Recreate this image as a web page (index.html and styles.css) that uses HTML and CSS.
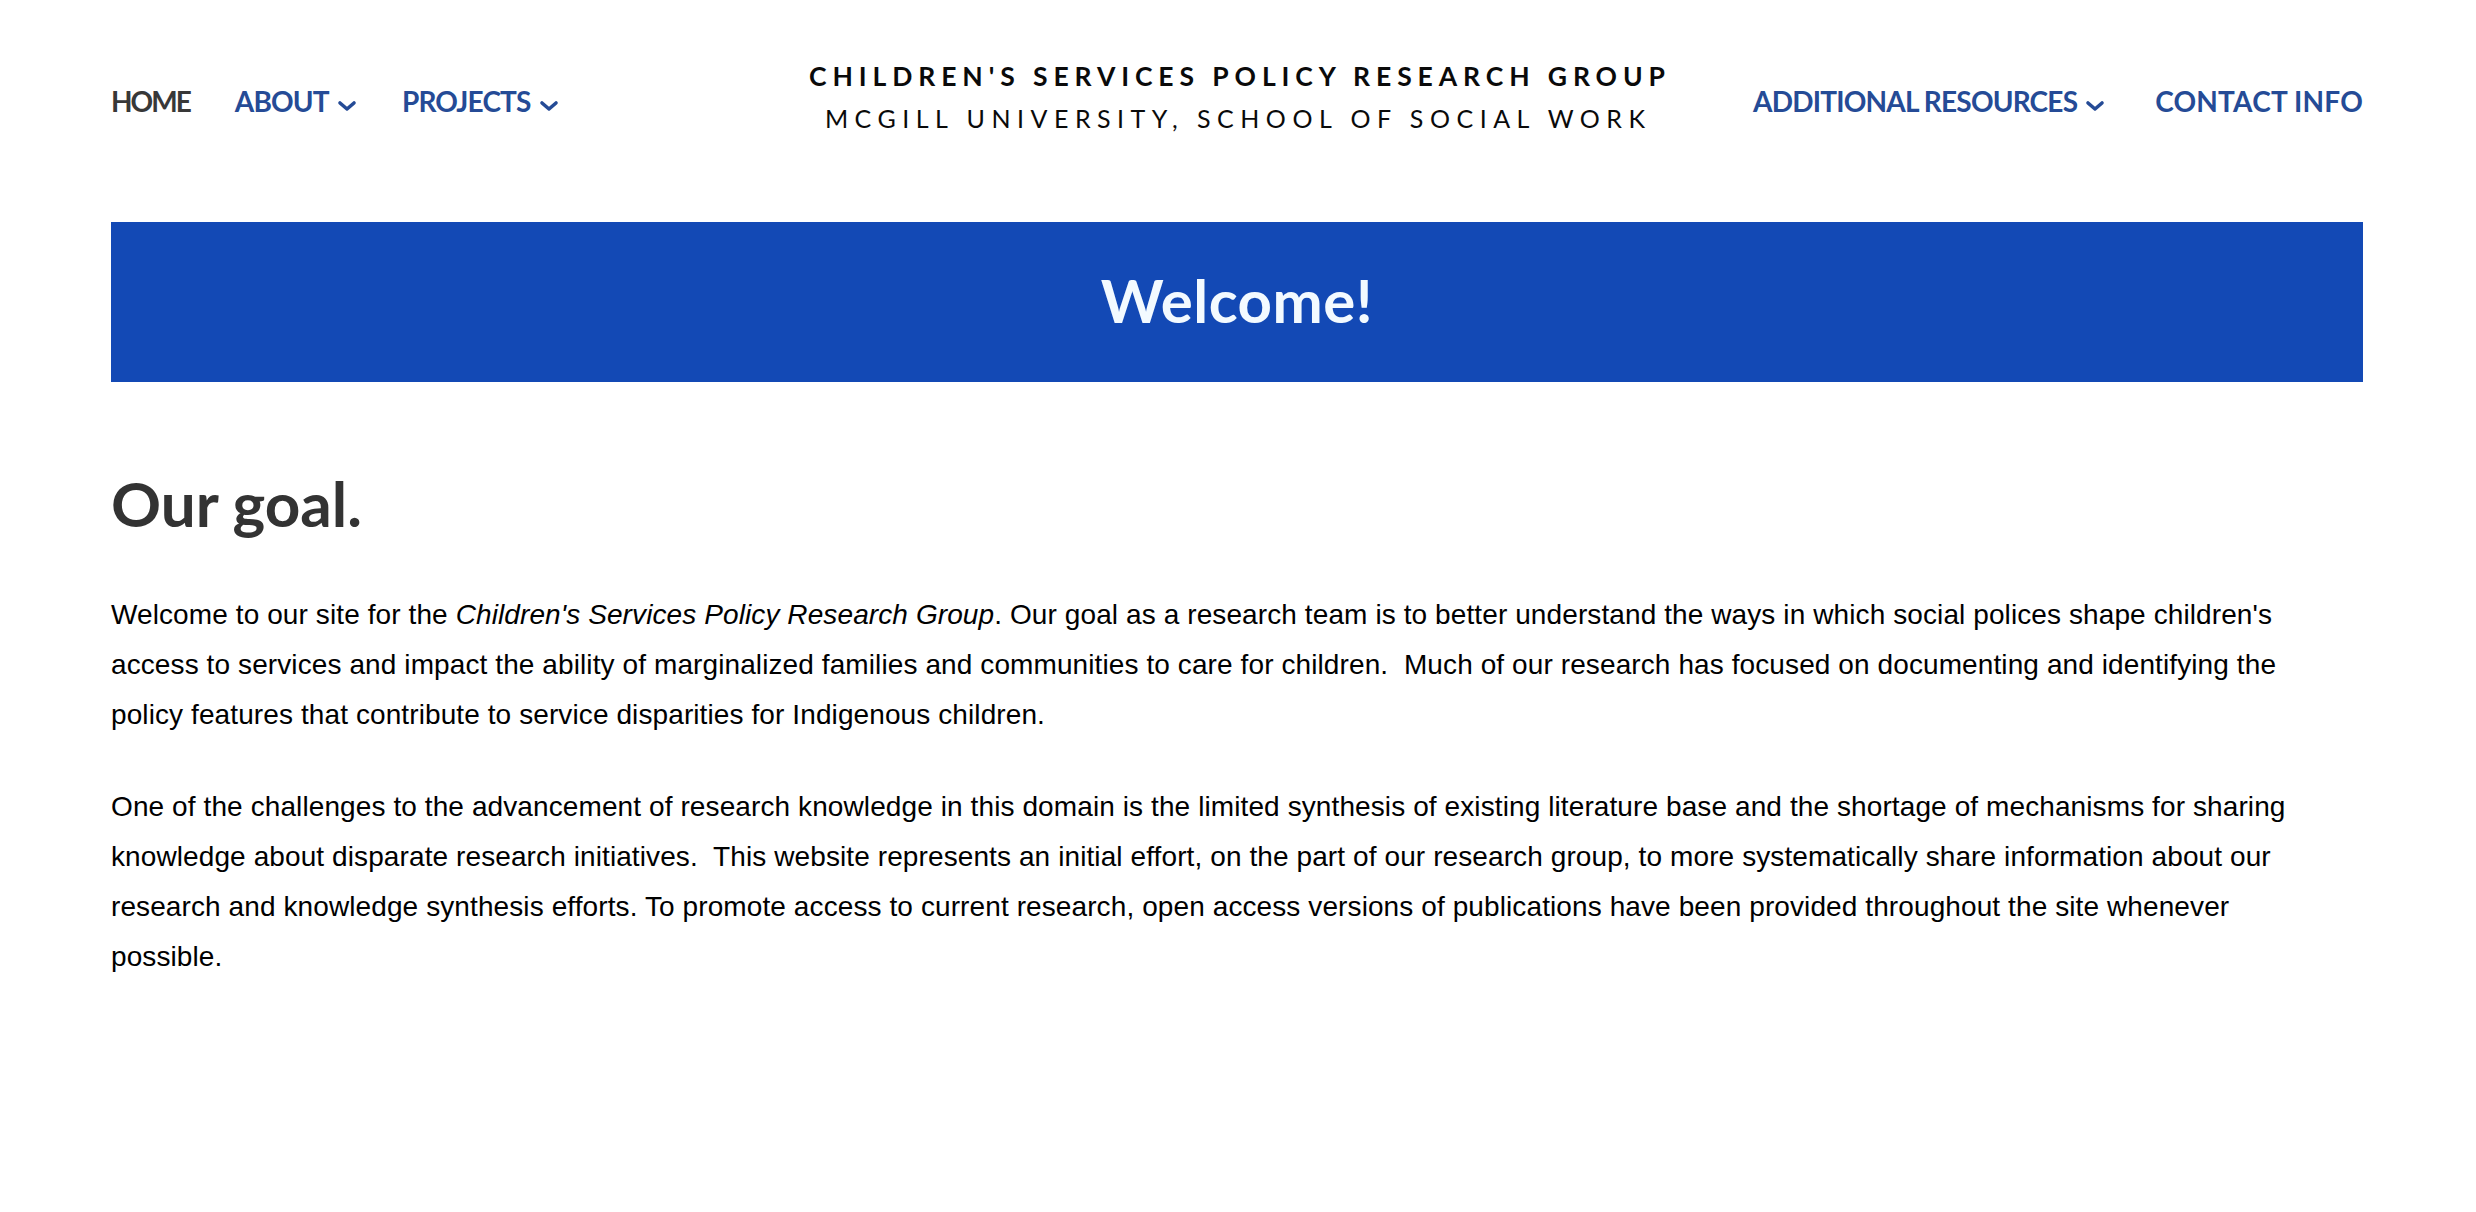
FILE: index.html
```html
<!DOCTYPE html>
<html lang="en">
<head>
<meta charset="utf-8">
<title>Children's Services Policy Research Group</title>
<link rel="stylesheet" href="styles.css">
</head>
<body>
<div class="page">
  <header class="site-header">
    <nav class="nav nav-left">
      <a class="nav-link nav-home" href="#">HOME</a>
      <a class="nav-link" href="#">ABOUT<svg class="chev" viewBox="0 0 20 12" width="20" height="12"><polyline points="3,3 10,9 17,3" fill="none" stroke="currentColor" stroke-width="3.6" stroke-linecap="round" stroke-linejoin="round"/></svg></a>
      <a class="nav-link" href="#">PROJECTS<svg class="chev" viewBox="0 0 20 12" width="20" height="12"><polyline points="3,3 10,9 17,3" fill="none" stroke="currentColor" stroke-width="3.6" stroke-linecap="round" stroke-linejoin="round"/></svg></a>
    </nav>
    <div class="brand">
      <div class="brand-title">CHILDREN'S SERVICES POLICY RESEARCH GROUP</div>
      <div class="brand-sub">MCGILL UNIVERSITY, SCHOOL OF SOCIAL WORK</div>
    </div>
    <nav class="nav nav-right">
      <a class="nav-link" href="#">ADDITIONAL RESOURCES<svg class="chev" viewBox="0 0 20 12" width="20" height="12"><polyline points="3,3 10,9 17,3" fill="none" stroke="currentColor" stroke-width="3.6" stroke-linecap="round" stroke-linejoin="round"/></svg></a>
      <a class="nav-link nav-contact" href="#">CONTACT INFO</a>
    </nav>
  </header>

  <main class="content">
    <section class="banner">
      <h1 class="banner-title">Welcome!</h1>
    </section>

    <h2 class="goal-title">Our goal.</h2>
    <p class="body-text">Welcome to our site for the <em>Children's Services Policy Research Group</em>. Our goal as a research team is to better understand the ways in which social polices shape children's access to services and impact the ability of marginalized families and communities to care for children.&nbsp; Much of our research has focused on documenting and identifying the policy features that contribute to service disparities for Indigenous children.</p>
    <p class="body-text">One of the challenges to the advancement of research knowledge in this domain is the limited synthesis of existing literature base and the shortage of mechanisms for sharing knowledge about disparate research initiatives.&nbsp; This website represents an initial effort, on the part of our research group, to more systematically share information about our research and knowledge synthesis efforts. To promote access to current research, open access versions of publications have been provided throughout the site whenever possible.</p>
  </main>
</div>
</body>
</html>
```

FILE: styles.css
```css
html, body {
  margin: 0;
  padding: 0;
  background: #ffffff;
}

.page {
  padding: 0 113px 0 111px;
}

.site-header {
  display: grid;
  grid-template-columns: 1fr auto 1fr;
  align-items: start;
  padding-top: 55px;
  padding-bottom: 83px;
}

.nav {
  display: flex;
  align-items: center;
  padding-top: 30px;
  font-family: Lato, "Open Sans", sans-serif;
  font-weight: 700;
  font-size: 28px;
  line-height: 1.2;
  letter-spacing: -0.8px;
}

.nav-left {
  justify-content: flex-start;
  gap: 45px;
}

.nav-right {
  justify-content: flex-end;
  gap: 50px;
}

.nav-link {
  color: #254b96;
  text-decoration: none;
  display: inline-flex;
  align-items: center;
  white-space: nowrap;
}

.nav-home {
  color: #383838;
  letter-spacing: -2px;
}

.nav-contact {
  letter-spacing: 0.2px;
}

.chev {
  margin-left: 8px;
  margin-top: 8px;
}

.brand {
  text-align: center;
  font-family: Lato, "Open Sans", sans-serif;
  color: #0a0a0a;
  padding: 0 40px;
}

.brand-title {
  font-size: 26.5px;
  font-weight: 700;
  line-height: 42px;
  letter-spacing: 5.9px;
  margin-right: -5.9px;
}

.brand-sub {
  font-size: 25px;
  font-weight: 400;
  line-height: 42px;
  letter-spacing: 6.5px;
  margin-right: -6.5px;
  margin-left: -4px;
}

.banner {
  background: #1349b5;
  padding: 42px 0 46px;
  text-align: center;
}

.banner-title {
  margin: 0;
  font-family: Lato, "Open Sans", sans-serif;
  font-weight: 700;
  font-size: 60px;
  line-height: 1.2;
  letter-spacing: 0.5px;
  color: #f3faff;
}

.goal-title {
  margin: 84px 0 50px;
  font-family: Lato, "Open Sans", sans-serif;
  font-weight: 700;
  font-size: 62px;
  line-height: 1.2;
  color: #333333;
}

.body-text {
  margin: 0 50px 42px 0;
  font-family: "Liberation Sans", Arial, sans-serif;
  font-size: 28px;
  line-height: 50px;
  letter-spacing: 0.1px;
  color: #000000;
}
```
